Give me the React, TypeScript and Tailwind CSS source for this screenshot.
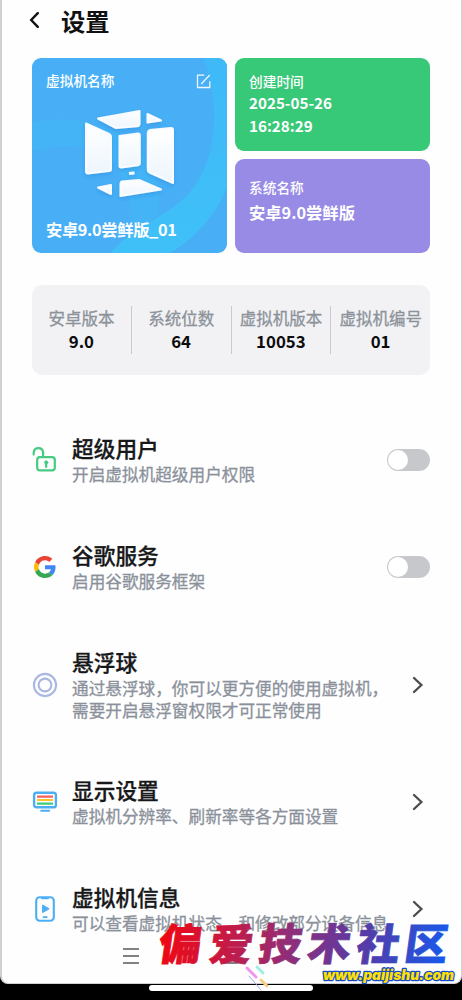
import React from "react";

function Chevron() {
  return (
    <svg className="mr-[6px] h-[18px] w-3 shrink-0" viewBox="0 0 12 18" fill="none" stroke="#4c4c4e" strokeWidth="2.3">
      <path d="M2 2l7.4 7L2 16" strokeLinecap="round" />
    </svg>
  );
}

function Toggle() {
  return (
    <div className="flex h-[22px] w-[43px] shrink-0 items-center rounded-full bg-[#c6c8cc] px-px">
      <div className="h-5 w-5 rounded-full bg-white" />
    </div>
  );
}

function LockIcon() {
  return (
    <svg className="h-[26px] w-[26px]" viewBox="0 0 26 26" fill="none" stroke="#46cb80" strokeWidth="2.2" strokeLinecap="round">
      <rect x="5.2" y="10.2" width="17.6" height="13.2" rx="2.6" />
      <path d="M1.7 7.6V5.8a4.8 4.8 0 0 1 9.4-1.2V10" />
      <path d="M14.2 17v3" />
      <circle cx="14.2" cy="15.4" r="1.6" fill="#46cb80" strokeWidth="1" />
    </svg>
  );
}

function GoogleIcon() {
  return (
    <svg className="h-[22px] w-[22px]" viewBox="0 0 48 48">
      <path fill="#EA4335" d="M24 9.5c3.54 0 6.71 1.22 9.21 3.6l6.85-6.85C35.9 2.38 30.47 0 24 0 14.62 0 6.51 5.38 2.56 13.22l7.98 6.19C12.43 13.72 17.74 9.5 24 9.5z" />
      <path fill="#4285F4" d="M46.98 24.55c0-1.57-.15-3.09-.38-4.55H24v9.02h12.94c-.58 2.96-2.26 5.48-4.78 7.18l7.73 6c4.51-4.18 7.09-10.36 7.09-17.65z" />
      <path fill="#FBBC05" d="M10.53 28.59A14.5 14.5 0 0 1 9.77 24c0-1.6.27-3.14.76-4.59l-7.98-6.19A23.9 23.9 0 0 0 0 24c0 3.88.92 7.54 2.56 10.78l7.97-6.19z" />
      <path fill="#34A853" d="M24 48c6.48 0 11.93-2.13 15.89-5.81l-7.73-6c-2.15 1.45-4.92 2.3-8.16 2.3-6.26 0-11.57-4.22-13.47-9.91l-7.98 6.19C6.51 42.62 14.62 48 24 48z" />
    </svg>
  );
}

function BallIcon() {
  return (
    <svg className="h-[26px] w-[26px]" viewBox="0 0 26 26" fill="none" stroke="#a9b7e2" strokeWidth="2.1">
      <circle cx="13" cy="13" r="11.1" />
      <circle cx="13" cy="13" r="6.4" />
    </svg>
  );
}

function DisplayIcon() {
  return (
    <svg className="h-[26px] w-[26px]" viewBox="0 0 26 26" fill="none">
      <rect x="2.1" y="3.7" width="21.8" height="14.6" rx="2.4" stroke="#4daef3" strokeWidth="2.4" />
      <path d="M5 7.6h16" stroke="#f4605c" strokeWidth="2.2" />
      <path d="M5 11h16" stroke="#fdc52d" strokeWidth="2.2" />
      <path d="M5 14.6h16" stroke="#3ecb7c" strokeWidth="2.2" />
      <path d="M9.2 21.8h8" stroke="#4daef3" strokeWidth="2" strokeLinecap="round" />
    </svg>
  );
}

function PhoneIcon() {
  return (
    <svg className="h-7 w-[22px]" viewBox="0 0 22 28" fill="none">
      <rect x="2.2" y="2.3" width="17.6" height="23.4" rx="3.4" stroke="#4daef5" strokeWidth="2.1" />
      <path d="M7.2 2.2h7.6v2H7.2z" fill="#4daef5" />
      <path d="M8.6 10v7.6l6.6-3.8z" fill="#4daef5" stroke="#4daef5" strokeLinejoin="round" />
      <path d="M9.5 22.2h3.2" stroke="#4daef5" strokeWidth="1.8" strokeLinecap="round" />
    </svg>
  );
}

type RowProps = {
  icon: React.ReactNode;
  title: string;
  lines: string[];
  action: React.ReactNode;
};

function Row({ icon, title, lines, action }: RowProps) {
  return (
    <div className="flex items-center">
      <div className="flex w-[26px] shrink-0 justify-center">{icon}</div>
      <div className="ml-[14px] min-w-0 flex-1 whitespace-nowrap">
        <div className="mb-[3px] h-[25px] text-[21.7px] leading-[25px] font-medium text-[#17181a] [-webkit-text-stroke:0.3px_#17181a]">{title}</div>
        {lines.map((l) => (
          <div key={l} className="h-[22px] text-[16.65px] leading-[22px] text-[#8b919b] [-webkit-text-stroke:0.3px_#8b919b]">{l}</div>
        ))}
      </div>
      {action}
    </div>
  );
}

function Stat({ label, value, last }: { label: string; value: string; last?: boolean }) {
  return (
    <div className={last ? "flex-1" : "flex-1 border-r border-[#c9cacf]"}>
      <div className="flex justify-center text-[16.5px] leading-6 whitespace-nowrap text-[#8c929a] [-webkit-text-stroke:0.3px_#8c929a]">{label}</div>
      <div className="-mt-px mb-px text-center text-[16.8px] leading-6 font-bold text-[#0c0c0d]">{value}</div>
    </div>
  );
}

function MachineCard() {
  return (
    <div className="relative h-[195px] w-[195px] overflow-hidden rounded-[9px] bg-[#48aff6] text-white">
      <svg className="absolute inset-0 h-[195px] w-[195px]" viewBox="0 0 195 195">
        <defs>
          <linearGradient id="band" x1="0" y1="0" x2="0" y2="1">
            <stop offset="0" stopColor="#3fb9f8" />
            <stop offset="1" stopColor="#3fc0f7" />
          </linearGradient>
          <linearGradient id="face" x1="0" y1="0" x2="0" y2="1">
            <stop offset="0" stopColor="#ffffff" />
            <stop offset="1" stopColor="#edf5fd" />
          </linearGradient>
          <filter id="shade" x="-20%" y="-20%" width="140%" height="140%">
            <feDropShadow dx="0" dy="2" stdDeviation="2" floodColor="#2385d5" floodOpacity="0.45" />
          </filter>
        </defs>
        <path d="M0 64C42 56 91 67 114 102C130 126 128 142 126 157L101 176C98 156 102 117 70 97C47 84 20 88 0 93z" fill="#40baf7" opacity=".5" />
        <path d="M171 0C191 49 188 126 132 155C118 165 95 175 79 195H138C166 179 187 151 195 129V0z" fill="url(#band)" />
        <g fill="url(#face)" stroke="#f8fbff" strokeWidth="2" strokeLinejoin="round" filter="url(#shade)">
          <path d="M66 60.5L107.5 53V65.5Q107.5 68 105 68.3L84 70z" />
          <path d="M115.5 56L129 62.5L115.5 64.5z" />
          <path d="M54 65.5L77 76Q79 77 79 79V111Q79 113 77 113L56 115.5Q54 115.5 54 113z" />
          <path d="M87.5 78L106 75.5Q107.8 75.5 107.8 77.5V105.5Q107.8 107 106 107.3L89.5 109.5Q87.5 109.8 87.5 108z" />
          <path d="M118 72L139 70Q141 70 141 72V125L117.5 114.5Q115.8 113.7 115.8 112V74.5Q116 72.5 118 72z" />
          <path d="M66 129.5L79 127V136z" />
          <path d="M90 123.5L107 122L129 131.5L88.5 138V125.5Q88.5 124 90 123.5z" />
          <path d="M97 115.5L102.5 115" strokeWidth="3" />
        </g>
      </svg>
      <div className="relative flex h-full flex-col justify-between pt-3 pr-4 pb-3 pl-[14px]">
        <div className="flex items-center justify-between">
          <span className="text-[13.7px] leading-5 font-medium">虚拟机名称</span>
          <svg className="mt-[2px] h-[15px] w-[15px]" viewBox="0 0 15 15" fill="none" stroke="#eef8ff" strokeWidth="1.3">
            <path d="M8.3 1.2H1.5v12.3h12.3V7.2M5.2 10L13.7 1" />
          </svg>
        </div>
        <div className="text-[16.3px] leading-6 font-bold tracking-[-0.35px]">安卓9.0尝鲜版_01</div>
      </div>
    </div>
  );
}

export default function App() {
  return (
    <div className="relative h-[1000px] w-[462px] overflow-hidden bg-black font-['Noto_Sans_CJK_SC','Noto_Sans',sans-serif]">
      <div className="h-[984px] overflow-hidden rounded-b-[8px] border-r border-b border-l-2 border-[#d0d1d3] bg-[#fefefe] pr-[31px] pl-[30px]">
        <header className="-ml-[5px] flex h-[42px] items-center">
          <svg className="-mt-[2px] h-[18px] w-3" viewBox="0 0 12 18" fill="none" stroke="#131313" strokeWidth="2.4" strokeLinecap="round">
            <path d="M10.8 2.2L4.2 9l6.6 6.8" />
          </svg>
          <h1 className="ml-[22px] text-[24.3px] leading-9 font-bold text-[#111]">设置</h1>
        </header>

        <section className="mt-4 flex gap-2">
          <MachineCard />
          <div className="flex w-[195px] flex-col gap-2 text-white">
            <div className="h-[93px] rounded-[9px] bg-[#37c878] pt-[13px] pl-[14px]">
              <div className="text-[13.7px] leading-5 font-medium">创建时间</div>
              <div className="text-[15.2px] leading-[23px] font-bold">2025-05-26<br />16:28:29</div>
            </div>
            <div className="h-[94px] rounded-[9px] bg-[#978be6] pt-[18px] pl-[14px]">
              <div className="text-[13.7px] leading-5 font-medium">系统名称</div>
              <div className="mt-[3px] text-[16.3px] leading-6 font-bold">安卓9.0尝鲜版</div>
            </div>
          </div>
        </section>

        <section className="mt-8 flex h-[90px] items-center rounded-[10px] bg-[#f2f2f5]">
          <Stat label="安卓版本" value="9.0" />
          <Stat label="系统位数" value="64" />
          <Stat label="虚拟机版本" value="10053" />
          <Stat label="虚拟机编号" value="01" last />
        </section>

        <section className="mt-[60px] flex flex-col gap-[56.8px]">
          <Row icon={<LockIcon />} title="超级用户" lines={["开启虚拟机超级用户权限"]} action={<Toggle />} />
          <Row icon={<GoogleIcon />} title="谷歌服务" lines={["启用谷歌服务框架"]} action={<Toggle />} />
          <Row icon={<BallIcon />} title="悬浮球" lines={["通过悬浮球，你可以更方便的使用虚拟机，", "需要开启悬浮窗权限才可正常使用"]} action={<Chevron />} />
          <Row icon={<DisplayIcon />} title="显示设置" lines={["虚拟机分辨率、刷新率等各方面设置"]} action={<Chevron />} />
          <Row icon={<PhoneIcon />} title="虚拟机信息" lines={["可以查看虚拟机状态、和修改部分设备信息"]} action={<Chevron />} />
        </section>
      </div>

      <div className="absolute top-[948px] left-[123px] flex w-4 flex-col gap-[5px]">
        <div className="h-[2px] bg-[#808183]" />
        <div className="h-[2px] bg-[#808183]" />
        <div className="h-[2px] bg-[#808183]" />
      </div>
      <div className="absolute top-[985px] left-[149px] h-[6px] w-[164px] rounded-full bg-white" />
      <div className="absolute top-[958px] left-[224px] h-[6px] w-4 rounded-b border-b-2 border-[#808183]" />

      <svg className="absolute top-[910px] left-[150px] h-[90px] w-[312px]" viewBox="0 0 312 90">
        <defs>
          <linearGradient id="brand" gradientUnits="userSpaceOnUse" x1="10" y1="0" x2="300" y2="0">
            <stop offset="0" stopColor="#f2060f" />
            <stop offset="0.22" stopColor="#cc173f" />
            <stop offset="0.46" stopColor="#902e79" />
            <stop offset="0.72" stopColor="#563ba7" />
            <stop offset="1" stopColor="#1958e9" />
          </linearGradient>
        </defs>
        <g strokeWidth="3" strokeLinecap="round">
          <path d="M97 58l9 9" stroke="#ef94ed" />
          <path d="M107 57l6 6" stroke="#9eeee3" />
          <path d="M99 66l12 14" stroke="#9aa5f0" strokeWidth="1" />
          <path d="M111 70l6 6" stroke="#f5ce83" />
        </g>
        <g transform="skewX(-8)">
          <text x="14 65 114 163 212 260" y="50" fontSize="43" fontWeight="900" fill="url(#brand)" stroke="url(#brand)" strokeWidth="0.8">偏爱技术社区</text>
        </g>
        <text x="173" y="70" fontSize="14.5" fontWeight="900" fontStyle="italic" className="font-['Inter',sans-serif]" fill="#ffe000" stroke="#164bc9" strokeWidth="2.6" strokeLinejoin="round" paintOrder="stroke" textLength="131" lengthAdjust="spacingAndGlyphs">www.paijishu.com</text>
      </svg>
    </div>
  );
}
